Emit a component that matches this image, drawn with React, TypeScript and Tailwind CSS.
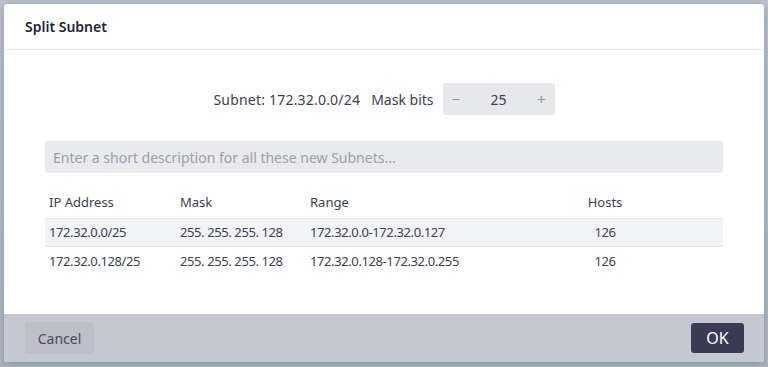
const rows = [
  { ip: "172.32.0.0/25", mask: "255. 255. 255. 128", range: "172.32.0.0-172.32.0.127", hosts: 126 },
  { ip: "172.32.0.128/25", mask: "255. 255. 255. 128", range: "172.32.0.128-172.32.0.255", hosts: 126 },
];

export default function App() {
  return (
    <div
      className="h-[367px] w-[768px] bg-gradient-to-b from-[#b9c2cc] to-[#aeb8c4] p-1"
      style={{ fontFamily: '"Noto Sans", "Open Sans", sans-serif' }}
    >
      <div className="flex h-[358px] w-[760px] flex-col overflow-hidden rounded-[3px] bg-white shadow-[0_2px_8px_rgba(60,70,90,0.35)]">
        <div className="flex h-[46px] shrink-0 items-center border-b border-[#e6e6f0] px-[21px]">
          <h2 className="text-[14px] font-semibold text-[#1f2433]">Split Subnet</h2>
        </div>

        <div className="flex-1 px-[41px]">
          <div className="mt-[33px] flex items-center justify-center text-[14px] text-[#3b4152]">
            <span className="tracking-[0.2px]">Subnet: 172.32.0.0/24</span>
            <span className="ml-[11px]">Mask bits</span>
            <div className="ml-[9px] flex h-[32px] w-[112px] items-center justify-between rounded-[3px] bg-[#e6e8ec] px-[9px] text-[#3b4152]">
              <button className="text-[15px] leading-none text-[#9097a4]">−</button>
              <span className="text-[14px]">25</span>
              <button className="text-[15px] leading-none text-[#9097a4]">+</button>
            </div>
          </div>

          <input
            className="mt-[26px] h-[32px] w-full rounded-[3px] bg-[#e8eaee] px-[8px] text-[14px] text-[#3b4152] outline-none placeholder:text-[#9aa0ab]"
            placeholder="Enter a short description for all these new Subnets..."
          />

          <table className="mt-[13px] w-full table-fixed border-collapse text-[13px] text-[#3b4152]">
            <colgroup>
              <col className="w-[131px]" />
              <col className="w-[130px]" />
              <col className="w-[277px]" />
              <col className="w-[44px]" />
              <col />
            </colgroup>
            <thead>
              <tr className="h-[32px] border-b border-[#e6e8ee]">
                <th className="pl-[4px] pt-[2px] text-left font-normal">IP Address</th>
                <th className="pl-[4px] pt-[2px] text-left font-normal">Mask</th>
                <th className="pl-[4px] pt-[2px] text-left font-normal">Range</th>
                <th className="pt-[2px] text-center font-normal">Hosts</th>
                <th />
              </tr>
            </thead>
            <tbody className="tracking-[-0.4px]">
              {rows.map((r, i) => (
                <tr
                  key={r.ip}
                  className={i === 0 ? "h-[28px] border-b border-[#e6e8ee] bg-[#f2f3f6]" : "h-[28px] bg-white"}
                >
                  <td className="pl-[4px] pt-[2px]">{r.ip}</td>
                  <td className="pl-[4px] pt-[2px]">{r.mask}</td>
                  <td className="pl-[4px] pt-[2px]">{r.range}</td>
                  <td className="pt-[2px] text-center">{r.hosts}</td>
                  <td />
                </tr>
              ))}
            </tbody>
          </table>
        </div>

        <div className="flex h-[48px] shrink-0 items-center justify-between bg-[#c6c7d0] pl-[21px] pr-[20px]">
          <button className="h-[32px] w-[69px] rounded-[3px] bg-[#bebfc9] text-[14px] text-[#4a4b62]">Cancel</button>
          <button className="h-[30px] w-[53px] rounded-[3px] bg-[#3d3a55] text-[16px] text-white">OK</button>
        </div>
      </div>
    </div>
  );
}
